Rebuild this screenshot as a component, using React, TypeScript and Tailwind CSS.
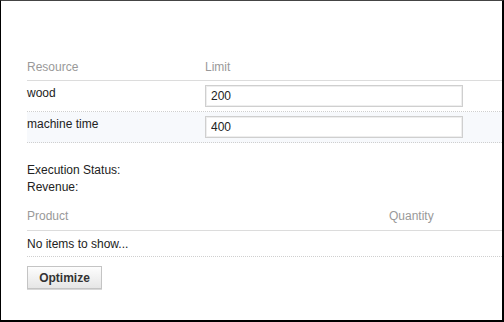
const RESOURCES: { name: string; limit: string }[] = [
  { name: "wood", limit: "200" },
  { name: "machine time", limit: "400" },
];

export default function App() {
  return (
    <div className="h-[322px] w-[504px] overflow-hidden border-t border-l border-r-2 border-b-2 border-t-[#444] border-l-black border-r-black border-b-black bg-white font-['Liberation_Sans',Arial,sans-serif] text-[12px] leading-[14px] text-[#222]">
      <div className="pl-[26px] pt-[59px]">
        {/* resource limits */}
        <div className="flex border-b border-[#dcdcdc] pb-[6px] text-[#999]">
          <div className="w-[178px]">Resource</div>
          <div>Limit</div>
        </div>
        {RESOURCES.map((r, i) => (
          <div
            key={r.name}
            className={
              i % 2 === 1
                ? "flex items-start border-b border-dotted border-[#cfcfcf] bg-[#f7f9fc] pt-[4px] pb-[4px]"
                : "flex items-start border-b border-dotted border-[#cfcfcf] pt-[4px] pb-[4px]"
            }
          >
            <div className="mt-[1px] w-[178px]">{r.name}</div>
            <input
              type="text"
              defaultValue={r.limit}
              className="h-[22px] w-[258px] border border-[#cfcfcf] bg-white px-[5px] text-[12px] text-[#222] shadow-[inset_0_0_0_1px_#eeeeee] outline-none"
            />
          </div>
        ))}

        {/* result */}
        <div className="mt-[19px] leading-[17px]">
          <div>Execution Status:</div>
          <div>Revenue:</div>
        </div>

        <div className="mt-[13px] flex border-b border-[#dcdcdc] pb-[7px] text-[#999]">
          <div className="w-[362px]">Product</div>
          <div>Quantity</div>
        </div>
        <div className="border-b border-dotted border-[#cfcfcf] pt-[6px] pb-[5px]">
          No items to show...
        </div>

        <button
          type="button"
          className="mt-[9px] h-[23px] w-[75px] border border-[#c4c4c4] bg-gradient-to-b from-[#fdfdfd] to-[#e6e6e6] text-[12px] font-bold text-[#333] shadow-[0_1px_0_#d8d8d8]"
        >
          Optimize
        </button>
      </div>
    </div>
  );
}
